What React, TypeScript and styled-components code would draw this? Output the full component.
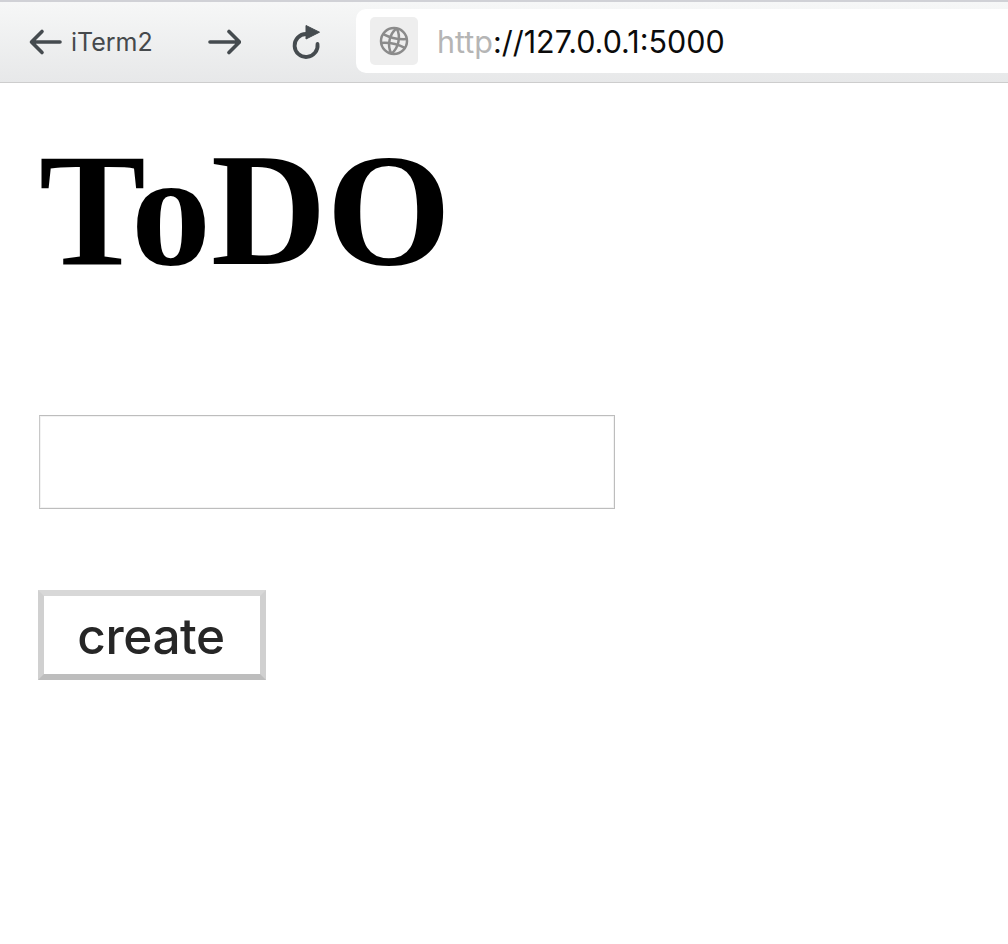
import React from "react";
import styled, { createGlobalStyle } from "styled-components";

const Global = createGlobalStyle`
  html, body { margin: 0; padding: 0; background: #fff; overflow: hidden; }
  #root { width: 1008px; height: 944px; overflow: hidden; }
`;

const Toolbar = styled.div`
  box-sizing: border-box;
  height: 83px;
  display: flex;
  align-items: center;
  padding: 0 0 1px 28px;
  border-top: 2px solid #d0d1d6;
  border-bottom: 1px solid #cdcdcd;
  background: linear-gradient(#f6f7f7, #e7e8e9);
`;

const NavGlyph = styled.svg<{ $gap: number }>`
  flex: none;
  display: block;
  margin-right: ${(p) => p.$gap}px;
`;

const BackLabel = styled.span`
  flex: none;
  font: 400 25px/1 Inter, sans-serif;
  color: #45494c;
  width: 136px;
  padding-top: 1px;
`;

const AddressField = styled.div`
  flex: none;
  width: 700px;
  height: 64px;
  margin-top: -1px;
  display: flex;
  align-items: center;
  gap: 19px;
  padding-left: 14px;
  background: #fff;
  border-radius: 10px;
  box-sizing: border-box;
`;

const SiteBadge = styled.div`
  width: 48px;
  height: 48px;
  display: flex;
  align-items: center;
  justify-content: center;
  border-radius: 5px;
  background: #eeeeee;
`;

const Url = styled.div`
  font: 400 30.5px/1 Inter, sans-serif;
  color: #0b0b0b;
  padding-top: 2px;
`;

const Scheme = styled.span`
  color: #b5b5b5;
`;

const Page = styled.main`
  padding: 0 39px;
`;

const Title = styled.h1`
  margin: 42px 0 0;
  font: 700 160px/170px "Liberation Serif", "Times New Roman", serif;
  color: #000;
`;

const TodoForm = styled.form`
  display: flex;
  flex-direction: column;
  align-items: flex-start;
`;

const TextField = styled.input`
  box-sizing: border-box;
  display: block;
  width: 576px;
  height: 94px;
  margin-top: 120px;
  padding: 0 8px;
  background: #fff;
  border: 1px solid #bdbdbd;
  border-left-color: #c8c8c8;
  box-shadow: inset 0 0 0 1px #f3f3f3;
  border-radius: 0;
  outline: none;
`;

const CreateButton = styled.button`
  box-sizing: border-box;
  width: 228px;
  height: 90px;
  margin: 81px 0 0 -1px;
  padding: 3px 2px 0 0;
  background: #fff;
  border-width: 6px;
  border-style: solid;
  border-color: #d8d8d8 #d0d0d0 #bdbdbd #d0d0d0;
  border-radius: 0;
  font: 450 49.5px/1 Inter, sans-serif;
  letter-spacing: -0.4px;
  color: #262626;
`;

export default function App() {
  const ink = "#454b4f";
  return (
    <>
      <Global />
      <Toolbar>
        <NavGlyph $gap={9} width="34" height="30" viewBox="0 0 34 30" fill="none" stroke={ink} strokeWidth="3.6" strokeLinecap="round" strokeLinejoin="round">
          <path d="M32 15H4M14 4.5 3.5 15 14 25.5" />
        </NavGlyph>
        <BackLabel>iTerm2</BackLabel>
        <NavGlyph $gap={49} width="34" height="30" viewBox="0 0 34 30" fill="none" stroke={ink} strokeWidth="3.6" strokeLinecap="round" strokeLinejoin="round">
          <path d="M3 15H32M22 4.5 32.5 15 22 25.5" />
        </NavGlyph>
        <NavGlyph $gap={34} width="32" height="36" viewBox="0 0 32 36" fill="none">
          <path d="M27.5 20A11.5 11.5 0 1 1 16 10" stroke={ink} strokeWidth="3.8" strokeLinecap="round" />
          <path d="M16 1.5 29.5 8.2 16 15Z" fill={ink} stroke={ink} strokeWidth="1" strokeLinejoin="round" />
        </NavGlyph>
        <AddressField>
          <SiteBadge>
            <svg width="30" height="30" viewBox="0 0 30 30" fill="none" stroke="#8b8b8b" strokeWidth="2.5">
              <circle cx="15" cy="15" r="13" />
              <g transform="rotate(12 15 15)">
                <path d="M3 10.5C10 12.5 20 12.5 27 10.5M3 19.5C10 17.5 20 17.5 27 19.5" />
                <path d="M15 2C9 9 9 21 15 28M15 2C21 9 21 21 15 28" />
              </g>
            </svg>
          </SiteBadge>
          <Url>
            <Scheme>http</Scheme>://127.0.0.1:5000
          </Url>
        </AddressField>
      </Toolbar>
      <Page>
        <Title>ToDO</Title>
        <TodoForm onSubmit={(e) => e.preventDefault()}>
          <TextField type="text" />
          <CreateButton type="submit">create</CreateButton>
        </TodoForm>
      </Page>
    </>
  );
}
